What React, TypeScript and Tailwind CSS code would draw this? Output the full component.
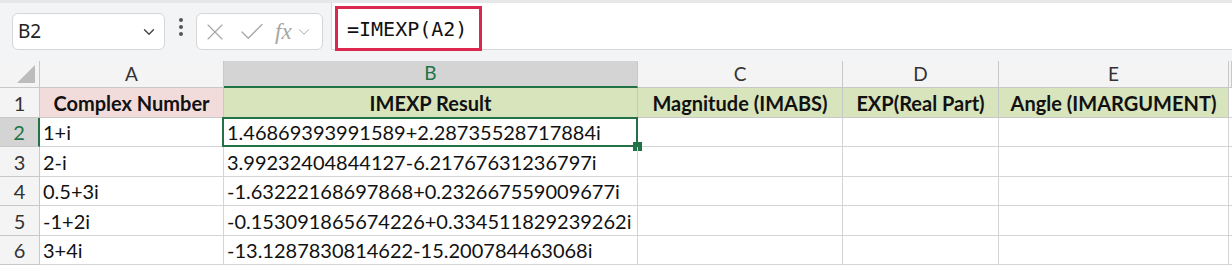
import React from 'react';
import { ChevronDown, X, Check } from 'lucide-react';

const cellFont = { fontFamily: 'Lato, "Open Sans", sans-serif' };

const headers = ['Complex Number', 'IMEXP Result', 'Magnitude (IMABS)', 'EXP(Real Part)', 'Angle (IMARGUMENT)'];

const rows = [
  ['1+i', '1.46869393991589+2.28735528717884i'],
  ['2-i', '3.99232404844127-6.21767631236797i'],
  ['0.5+3i', '-1.63222168697868+0.232667559009677i'],
  ['-1+2i', '-0.153091865674226+0.334511829239262i'],
  ['3+4i', '-13.1287830814622-15.200784463068i'],
];

const rowHeights = ['h-[30px]', 'h-[29px]', 'h-[30px]', 'h-[29px]', 'h-[30px]', 'h-[29px]'];

const App = () => {
  return (
    <div className="w-[1232px] h-[269px] bg-white overflow-hidden" style={cellFont}>
      {/* Formula bar */}
      <div className="h-[61px] bg-[#f3f4f6] border-t-[3px] border-[#e6e7e9] flex items-start">
        <div className="ml-[12px] mt-[10px] w-[153px] h-[37px] bg-white border border-[#d6d6d6] rounded-[6px] flex items-center justify-between pl-[5px] pr-[6px]">
          <span className="text-[19px] text-[#222]" style={{ fontFamily: '"Noto Sans", sans-serif' }}>B2</span>
          <ChevronDown className="w-[18px] h-[18px] text-[#444]" strokeWidth={1.8} />
        </div>
        <div className="w-[31px] h-[47px] flex flex-col items-center justify-center gap-[3px]">
          <span className="w-[4px] h-[4px] rounded-full bg-[#555]" />
          <span className="w-[4px] h-[4px] rounded-full bg-[#555]" />
          <span className="w-[4px] h-[4px] rounded-full bg-[#555]" />
        </div>
        <div className="mt-[10px] w-[127px] h-[37px] bg-white border border-[#d6d6d6] rounded-[6px] flex items-center pl-[4px] gap-[8px] text-[#a6a6a6]">
          <X className="w-[28px] h-[28px]" strokeWidth={1} />
          <Check className="w-[30px] h-[30px]" strokeWidth={1} />
          <span className="flex items-center">
            <span className="italic text-[23px] leading-none" style={{ fontFamily: '"Liberation Serif", serif' }}>fx</span>
            <ChevronDown className="w-[18px] h-[18px] ml-[3px]" strokeWidth={1.3} />
          </span>
        </div>
        <div className="ml-[8px] flex-1 h-[47px] bg-white border-l border-b border-[#d9d9d9] flex items-start">
          <div className="ml-[3px] mt-[3px] h-[45px] w-[147px] border-[3px] border-[#dc2850] flex items-center pl-[9px]">
            <span className="text-[20px] text-[#111]" style={{ fontFamily: '"DejaVu Sans Mono", monospace' }}>=IMEXP(A2)</span>
          </div>
        </div>
      </div>

      {/* Grid */}
      <div className="grid grid-cols-[40px_184px_414px_205px_156px_230px_1fr]">
        {/* column header row */}
        <div className="h-[27px] bg-[#f4f4f4] border-r border-b border-[#c8c8c8] flex items-end justify-end pr-[4px] pb-[4px]">
          <div className="w-0 h-0 border-l-[18px] border-l-transparent border-b-[18px] border-b-[#bcbcbc]" />
        </div>
        {['A', 'B', 'C', 'D', 'E', ''].map((l) => (
          <div
            key={'h' + l}
            className={
              l === 'B'
                ? 'h-[27px] bg-[#d4d4d4] border-r border-[#c8c8c8] border-b-2 border-b-[#217346] flex items-center justify-center text-[19px] text-[#217346]'
                : 'h-[27px] bg-[#f4f4f4] border-r border-b border-[#c8c8c8] flex items-center justify-center text-[19px] text-[#333]'
            }
          >
            {l}
          </div>
        ))}

        {/* row 1 headers */}
        <div className={`${rowHeights[0]} bg-[#f4f4f4] border-r border-b border-[#c8c8c8] flex items-center justify-center text-[20px] text-[#333]`}>1</div>
        {headers.map((h, i) => (
          <div
            key={h}
            className={`${rowHeights[0]} border-r border-b border-[#c8c8c8] flex items-center justify-center font-bold text-[20px] text-[#111] whitespace-nowrap ${
              i === 0 ? 'bg-[#f2dcdb]' : 'bg-[#d8e4bc]'
            }`}
          >
            {h}
          </div>
        ))}
        <div className={`${rowHeights[0]} border-b border-[#d4d4d4]`} />

        {/* data rows */}
        {rows.map((r, idx) => {
          const sel = idx === 0;
          const h = rowHeights[idx + 1];
          return (
            <React.Fragment key={r[0]}>
              <div
                className={
                  sel
                    ? `${h} bg-[#d4d4d4] border-r-2 border-r-[#217346] border-b border-[#c8c8c8] flex items-center justify-center text-[20px] text-[#217346]`
                    : `${h} bg-[#f4f4f4] border-r border-b border-[#c8c8c8] flex items-center justify-center text-[20px] text-[#333]`
                }
              >
                {idx + 2}
              </div>
              <div className={`${h} border-r border-b border-[#d4d4d4] flex items-center pl-[3px] text-[20px] text-[#111] whitespace-nowrap`}>
                {r[0]}
              </div>
              <div className={`${h} relative border-r border-b border-[#d4d4d4] flex items-center pl-[3px] text-[20px] text-[#111] whitespace-nowrap`}>
                {r[1]}
                {sel && (
                  <>
                    <div className="absolute -left-[2px] -top-[1px] -right-[1px] -bottom-[1px] border-2 border-[#217346]" />
                    <div className="absolute -right-[5px] -bottom-[5px] w-[9px] h-[9px] bg-[#217346]" />
                  </>
                )}
              </div>
              <div className={`${h} border-r border-b border-[#d4d4d4]`} />
              <div className={`${h} border-r border-b border-[#d4d4d4]`} />
              <div className={`${h} border-r border-b border-[#d4d4d4]`} />
              <div className={`${h} border-b border-[#d4d4d4]`} />
            </React.Fragment>
          );
        })}
      </div>
    </div>
  );
};

export default App;
